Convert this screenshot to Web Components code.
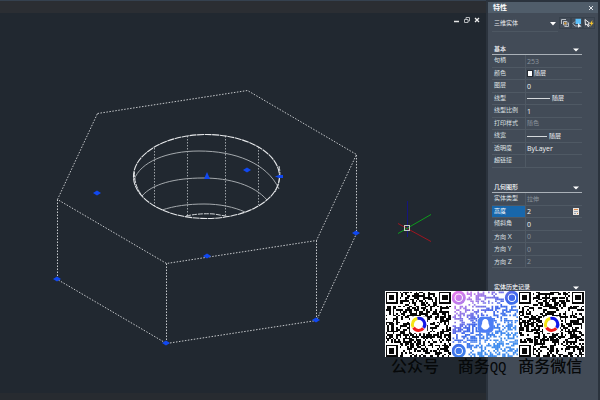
<!DOCTYPE html>
<html lang="zh-CN">
<head>
<meta charset="utf-8">
<title>特性</title>
<style>
html,body{height:100%;margin:0}
body{background:#212830;font-family:"Open Sans","Noto Sans CJK SC",sans-serif;color:#e6e9ec;overflow:hidden}
</style>
</head>
<body>
<cad-app>
  <cad-viewport></cad-viewport>
  <property-palette slot="side">
    <property-section label="基本">
      <property-row label="句柄" value="253" muted></property-row>
      <property-row label="颜色" value="随层" mark="swatch"></property-row>
      <property-row label="图层" value="0"></property-row>
      <property-row label="线型" value="随层" mark="line"></property-row>
      <property-row label="线型比例" value="1"></property-row>
      <property-row label="打印样式" value="随色" muted></property-row>
      <property-row label="线宽" value="随层" mark="short"></property-row>
      <property-row label="透明度" value="ByLayer"></property-row>
      <property-row label="超链接" value=""></property-row>
    </property-section>
    <property-section label="几何图形">
      <property-row label="实体类型" value="拉伸" muted></property-row>
      <property-row label="高度" value="2" mark="calc" selected></property-row>
      <property-row label="倾斜角" value="0"></property-row>
      <property-row label="方向 X" value="0" muted></property-row>
      <property-row label="方向 Y" value="0" muted></property-row>
      <property-row label="方向 Z" value="2" muted></property-row>
    </property-section>
    <property-section label="实体历史记录"></property-section>
  </property-palette>
  <contact-strip slot="overlay">
    <qr-card seed="11">公众号</qr-card>
    <qr-card seed="29" kind="dots">商务<span style="font:14px/1 'Liberation Mono',monospace">QQ</span></qr-card>
    <qr-card seed="47" wide>商务微信</qr-card>
  </contact-strip>
</cad-app>
<script>
class Base extends HTMLElement{
  connectedCallback(){
    if(this.shadowRoot)return;
    this.attachShadow({mode:'open'}).innerHTML=this.view();
  }
}
customElements.define('cad-app',class extends Base{view(){return `
<style>:host{display:flex;position:relative;height:100vh;background:#212830}
::slotted(cad-viewport){flex:1;min-width:0}</style>
<slot></slot><slot name="side"></slot><slot name="overlay"></slot>`}});

customElements.define('cad-viewport',class extends Base{view(){
  const grips=[[97,193],[247,170],[57,279],[166,343],[316,320],[356,233],[207,256]]
    .map(([x,y])=>`<path d="M${x-4} ${y}L${x} ${y-2.5}L${x+4} ${y}L${x} ${y+2.5}Z"/>`).join('');
  return `
<style>
:host{display:flex;flex-direction:column;position:relative}
.strip{height:13px;background:#2b2e33;border-top:1px solid #35414f;box-sizing:border-box;flex:none}
.foot{height:7px;background:#272b30;flex:none}
svg.model{display:block;flex:1;min-height:0;width:100%}
.win{position:absolute;right:5px;top:15px;display:flex;gap:2px}
button{all:unset;width:8px;height:10px;display:flex;align-items:center;justify-content:center}
button svg{width:8px;height:8px}
</style>
<div class="strip"></div>
<svg class="model" viewBox="0 13 486 380" preserveAspectRatio="xMinYMin meet" fill="none">
 <g stroke="#c6c9cc" stroke-width="1" stroke-dasharray="1.500 1.500">
  <path d="M97.500 113.500L247.500 90.500L356.500 154.500L316.500 240.500L166.500 263.500L57.500 199.500Z"/>
  <path d="M57.500 199.500V279.500L166.500 343.500L316.500 320.500L356.500 233.500V154.500M166.500 263.500V343.500M316.500 240.500V320.500"/>
  <path stroke="#9da2a7" d="M154.500 148V206M187.500 136V217M225.500 136V217M258.500 147V205"/>
 </g>
 <g stroke="#a4a9ad" stroke-width="1">
  <path d="M134 180C140 162 167 151 199 151C235 151 267 163 279 189"/>
  <path d="M142 196C152 184 175 178 203 178C230 178 254 185 267 200"/>
  <path d="M162 210C174 206 188 204 204 204C220 204 234 207 245 212"/>
 </g>
 <ellipse cx="206.500" cy="176.500" rx="73" ry="42" stroke="#e6e8ea" stroke-width="1.100" stroke-dasharray="7 .6"/>
 <path d="M134.500 172Q134 186 143 197M279 166Q282 178 275 192M186 216Q200 213 214 214L228 216.500" stroke="#d4d7da" stroke-dasharray="5 1"/>
 <g fill="#1148ef">${grips}<path d="M207 172L210 179H204Z"/><path d="M275 176.500L279 175H283V178H279Z"/></g>
 <g stroke-width="1">
  <path d="M407.500 201V237" stroke="#15157c"/>
  <path d="M398 223.500L431 241.500" stroke="#9d1520"/>
  <path d="M398 233.500L431 214.500" stroke="#0d9b1c"/>
  <rect x="404.500" y="225.500" width="5" height="5" stroke="#c5c9c5"/>
 </g>
</svg>
<div class="foot"></div>
<div class="win">
<button aria-label="最小化"><svg viewBox="0 0 8 8"><path d="M1 5.500H6" stroke="#e6e6e6" stroke-width="1.500"/></svg></button>
<button aria-label="还原"><svg viewBox="0 0 8 8" fill="none" stroke="#b4b7ba"><path d="M3 3V1.500H6.500V5H5M1.500 3.500H5V6.500H1.500Z"/></svg></button>
<button aria-label="关闭"><svg viewBox="0 0 8 8"><path d="M2 2L6 6M6 2L2 6" stroke="#eee" stroke-width="1.300"/></svg></button>
</div>`}});

customElements.define('property-palette',class extends Base{view(){return `
<style>
:host{display:flex;flex-direction:column;width:114px;flex:none;background:#424b57;border:solid #2b333d;border-width:2px 2px 0;box-sizing:border-box}
header{display:flex;align-items:center;justify-content:space-between;height:11px;padding:0 4px 0 5px;background:#505d6a;flex:none}
h1{margin:0;font-size:7px;line-height:11px;font-weight:700;color:#fff}
button{all:unset;display:flex}
.tools{display:flex;align-items:center;gap:2px;height:18px;margin:1px 4px 13px 4px}
.pick{position:relative;flex:1;border-bottom:1px solid #4d5762;height:16px;display:flex;align-items:center}
select{appearance:none;border:0;background:none;color:#e6e9ec;font:6px/12px "Noto Sans CJK SC",sans-serif;padding:0 0 0 2px;width:100%;outline:0}
.pick svg{position:absolute;right:2px;top:7px;width:6px;height:4px;pointer-events:none}
.tools button{width:10px;height:10px;outline:1px solid #38424d}
.tools button svg{width:10px;height:10px}
</style>
<header><h1>特性</h1><button aria-label="关闭"><svg width="6" height="6" viewBox="0 0 6 6"><path d="M1 1L5 5M5 1L1 5" stroke="#e4e7ea"/></svg></button></header>
<div class="tools">
<div class="pick"><select aria-label="对象类型"><option>三维实体</option></select><svg viewBox="0 0 6 4"><path d="M0 0H6L3 3.500Z" fill="#fff"/></svg></div>
<button aria-label="切换 PICKADD"><svg viewBox="0 0 10 10" fill="none" stroke="#b8bec4"><path d="M1.500 6V1.500H6M3.500 3.500H7V7H3.500ZM8.500 4.500V8.500H4.500"/><path d="M5.300 4V6.600M4 5.300H6.600" stroke="#d29a40"/></svg></button>
<button aria-label="选择对象"><svg viewBox="0 0 10 10"><path d="M3.500 .8H9V6H3.500Z" fill="#5cc0fa"/><path d="M3 3.500L1 5.500L3 8H6" fill="none" stroke="#aab5c0"/><path d="M6 5L9.500 8.500L7.500 8.700L6 9.800Z" fill="#e8ecef"/></svg></button>
<button aria-label="快速选择"><svg viewBox="0 0 10 10"><path d="M1 1.500L5.500 5L4.300 5.500L5.200 8L4 8.500L3 6L1.500 7Z" fill="none" stroke="#eee"/><path d="M8.500 2L5.500 6H7.300L6 9L9.800 4.800H8Z" fill="#f2c230"/></svg></button>
</div>
<slot></slot>`}});

customElements.define('property-section',class extends Base{view(){return `
<style>
:host{display:block;margin:0 16px 15px 4px}
.head{all:unset;box-sizing:border-box;display:flex;width:100%;height:10px;align-items:center;justify-content:space-between;padding:0 3px 0 2px;border-bottom:1px solid #aab1b8;font-size:6px;line-height:9px;font-weight:500;color:#f4f6f7}
.rows{display:flex;flex-direction:column}
::slotted(property-row:nth-child(odd)){height:13px}
</style>
<button class="head" aria-expanded="true"><span>${this.getAttribute('label')}</span><svg width="6" height="4" viewBox="0 0 6 4"><path d="M0 .5H6L3 3.500Z" fill="#fff"/></svg></button>
<div class="rows" role="table" aria-label="${this.getAttribute('label')}"><slot></slot></div>`}});

customElements.define('property-row',class extends Base{view(){
  const m=this.getAttribute('mark'),value=this.getAttribute('value');
  const label=this.getAttribute('label').replace(/ ([XYZ])$/,'<span class="latin"> $1</span>');
  const pre=m==='swatch'?'<i class="sw"></i>':m==='line'?'<i class="ln"></i>':m==='short'?'<i class="ln s"></i>':'';
  const calc=m==='calc'?'<button aria-label="快速计算器"><svg width="6" height="7" viewBox="0 0 6 7"><path d="M0 0H6V7H0Z" fill="#e9e4df"/><path d="M1 1.500H5" stroke="#e08a4a"/><path d="M1 3.500H5M1 5.500H3" stroke="#98a4b2"/><path d="M4 5.500H5" stroke="#d08040"/></svg></button>':'';
  return `
<style>
:host{display:flex;height:12px;box-sizing:border-box;border-bottom:1px solid #4f5964;font-size:6px;line-height:11px;white-space:nowrap}
.k{width:34px;box-sizing:border-box;padding-left:2px;border-right:1px solid #4f5964;color:#dde1e4;flex:none}
:host([selected]) .k{background:#1867ab;color:#fff}
.v{flex:1;display:flex;align-items:center;padding:0 2px 0 1px;gap:2px;color:#f2f4f5;min-width:0}
:host([muted]) .v{color:#8b949d}
.latin{font-size:7px}
.sw{width:4px;height:5px;background:#fff;outline:1px solid #252b32;margin-left:1px}
.ln{width:23px;height:1px;background:#d5d9dc}.ln.s{width:20px}
button{all:unset;display:flex;margin-left:auto;margin-right:1px}
</style><div class="k" role="rowheader">${label}</div><div class="v" role="cell">${pre}<span class="${/^\w+$/.test(value)?'latin':''}">${value}</span>${calc}</div>`}
  connectedCallback(){this.setAttribute('role','row');super.connectedCallback()}
});

customElements.define('contact-strip',class extends Base{view(){return `
<style>:host{position:absolute;right:15px;bottom:26px;display:grid;grid-template-columns:repeat(3,minmax(0,1fr));width:200px;color:#060809}</style><slot></slot>`}});

customElements.define('qr-card',class extends Base{view(){
  const n=37,dots=this.getAttribute('kind')==='dots';
  let s=+this.getAttribute('seed')*7919,d='';
  const rnd=()=>{s=(s*1664525+1013904223)%4294967296;return s/4294967296};
  for(let y=0;y<n;y++)for(let x=0;x<n;x++){
    const on=rnd()<.5;
    if(!on||(x<8&&y<8)||(x>n-9&&y<8)||(x<8&&y>n-9))continue;
    if(Math.hypot(x-18,y-18)<5)continue;
    d+=dots?`M${x} ${y}h.95v.95h-.95z`:`M${x} ${y}h1v1h-1z`;
  }
  const ink=dots?'url(#g)':'#080808';
  const eye=(x,y)=>dots
    ?`<circle cx="${x+3.5}" cy="${y+3.5}" r="3.200" fill="none" stroke="${ink}" stroke-width="1.600"/><circle cx="${x+3.5}" cy="${y+3.5}" r="1.800" fill="${ink}"/>`
    :`<path d="M${x+.5} ${y+.5}h6v6h-6z" fill="none" stroke="${ink}"/><path d="M${x+2} ${y+2}h3v3h-3z" fill="${ink}"/>`;
  const logo=dots
    ?`<rect x="14.200" y="14.200" width="9" height="9" rx="2.500" fill="#4c7df5"/><path d="M18.500 15.500C17 15.500 16.700 17 16.700 18C16 19.500 16 20.500 16.600 20.300C17.500 22 19.500 22 20.400 20.300C21 20.500 21 19.500 20.300 18C20.300 17 20 15.500 18.500 15.500Z" fill="#fff"/>`
    :`<rect x="14" y="14" width="9.500" height="9.500" rx="1" fill="#fff"/><g fill="none" stroke-width="1.700"><path d="M18 15.200A3.400 3.400 0 0 0 15.600 20.200" stroke="#f5e614"/><path d="M18 15.200A3.400 3.400 0 0 1 21.500 20.500" stroke="#1218e8"/><path d="M15.800 20.400A3.400 3.400 0 0 0 21.300 20.700" stroke="#ee2020"/></g>`;
  return `
<style>:host{display:block}svg{display:block;width:100%;background:#fff}
.cap{font-size:16px;line-height:17px;height:17px;padding-left:6px;white-space:nowrap;font-weight:500;font-family:"Noto Sans CJK SC",sans-serif}
:host([wide]) .cap{padding-left:0}</style>
<svg viewBox="-.3 -.3 37.600 37.300" shape-rendering="${dots?'auto':'crispEdges'}" aria-hidden="true">
<defs><linearGradient id="g" gradientUnits="userSpaceOnUse" x1="0" y1="0" x2="22" y2="30"><stop offset="0" stop-color="#ee7eef"/><stop offset=".35" stop-color="#9478e6"/><stop offset=".6" stop-color="#3f66ea"/><stop offset="1" stop-color="#3f8cee"/></linearGradient></defs>
<path d="${d}" fill="${ink}"/>${eye(0,0)}${eye(n-7,0)}${eye(0,n-7)}<g shape-rendering="auto">${logo}</g></svg>
<div class="cap"><slot></slot></div>`}});
</script>
</body>
</html>
